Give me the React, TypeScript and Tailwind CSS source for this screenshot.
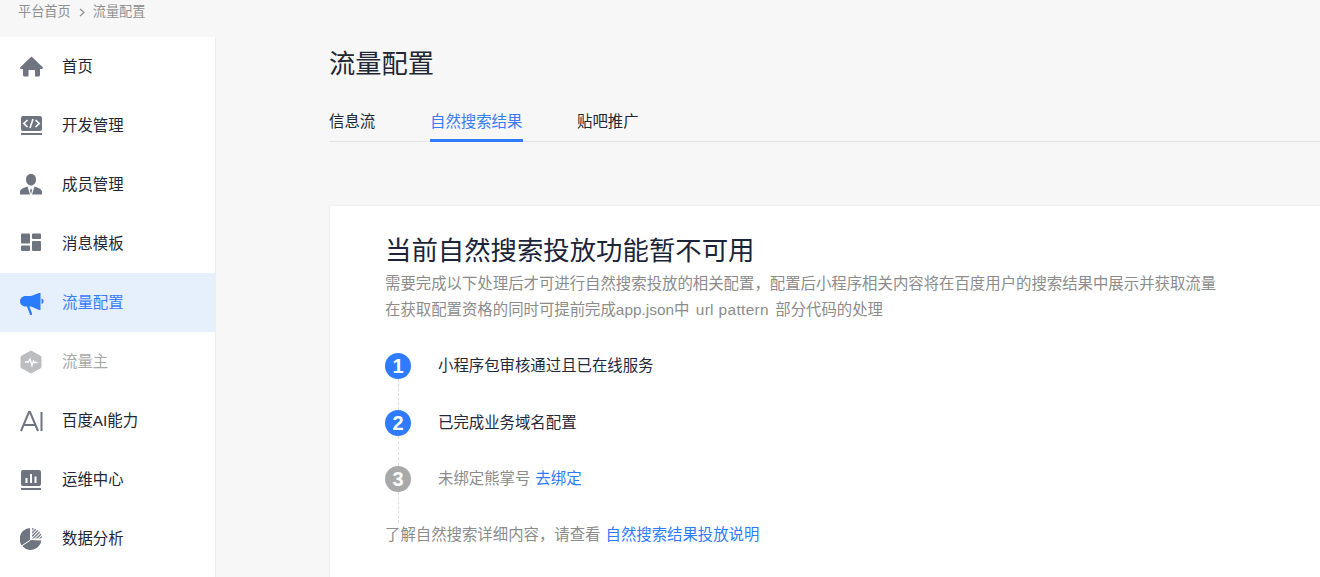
import type { ReactNode } from "react";

const HomeIcon = () => (
  <svg width="24" height="24" viewBox="0 0 24 24" fill="currentColor">
    <path d="M11 1.5 L22.5 12.5 Q22.5 14 21 14 L19.5 14 L19.5 20 Q19.5 21.5 18 21.5 L14.5 21.5 L14.5 15 L8 15 L8 21.5 L4 21.5 Q2.5 21.5 2.5 20 L2.5 14 L1 14 Q-0.5 14 -0.5 12.5 Z" transform="translate(0.5 0)" />
  </svg>
);

const CodeIcon = () => (
  <svg width="24" height="24" viewBox="0 0 24 24">
    <rect x="1" y="2" width="21" height="15" rx="2" fill="currentColor" />
    <rect x="1" y="19" width="21" height="2" fill="currentColor" />
    <path d="M7.5 6 L3.8 9.5 L7.5 13 M15.5 6 L19.2 9.5 L15.5 13 M13 5 L10 14" fill="none" stroke="#fff" strokeWidth="1.6" />
  </svg>
);

const UserIcon = () => (
  <svg width="24" height="24" viewBox="0 0 24 24" fill="currentColor">
    <path d="M11 1 C14.5 1 16 3.5 16 6.5 C16 10 13.8 12.5 11 12.5 C8.2 12.5 6 10 6 6.5 C6 3.5 7.5 1 11 1 Z" />
    <path d="M7.5 13.5 L10 21.5 L0 21.5 L0 19 C0 16 4 14.8 7.5 13.5 Z M14.5 13.5 C18 14.8 22 16 22 19 L22 21.5 L12 21.5 Z" />
    <path d="M11 15 L12 17.5 L11 21 L10 17.5 Z" />
  </svg>
);

const DashIcon = () => (
  <svg width="24" height="24" viewBox="0 0 24 24" fill="currentColor">
    <rect x="1" y="1.5" width="9" height="10" rx="1" />
    <rect x="1" y="13.5" width="9" height="5.5" rx="1" />
    <rect x="12" y="1.5" width="9" height="5.5" rx="1" />
    <rect x="12" y="9" width="9" height="10" rx="1" />
  </svg>
);

const MegaphoneIcon = () => (
  <svg width="24" height="24" viewBox="0 0 24 24" fill="currentColor">
    <path d="M6 5 L11 5 L19 2 L20.5 2 L20.5 19 L19 19 L11 15.5 L6 15.5 C2 15.5 0 13 0 10.25 C0 7.5 2 5 6 5 Z" />
    <path d="M21.5 7.5 C23 8 23.5 9 23.5 10.25 C23.5 11.5 23 12.5 21.5 13 Z" />
    <path d="M8 15 L11 23" fill="none" stroke="currentColor" strokeWidth="2.2" strokeLinecap="round" />
  </svg>
);

const PulseIcon = () => (
  <svg width="24" height="24" viewBox="0 0 24 24">
    <path d="M11 1 L21 6.5 L21 17.5 L11 23 L1 17.5 L1 6.5 Z" fill="currentColor" stroke="currentColor" strokeLinejoin="round" />
    <path d="M5 12 L8.5 12 L10 9 L12 15.5 L13.5 11 L14.5 12.5 L17.5 12.5" fill="none" stroke="#fff" strokeWidth="1.3" />
  </svg>
);

const AiIcon = () => (
  <svg width="24" height="24" viewBox="0 0 24 24" fill="none" stroke="currentColor" strokeWidth="2">
    <path d="M1 22 L9 3 L10 3 L18 22 M4 16 L15 16" />
    <path d="M21.5 3 L21.5 22" />
  </svg>
);

const ChartIcon = () => (
  <svg width="24" height="24" viewBox="0 0 24 24">
    <rect x="1" y="2" width="20" height="16" rx="2" fill="currentColor" />
    <rect x="1" y="20" width="20" height="2" fill="currentColor" />
    <path d="M5.5 10 L7.5 10 L7.5 15 L5.5 15 Z M10 6 L12 6 L12 15 L10 15 Z M14.5 8.5 L16.5 8.5 L16.5 15 L14.5 15 Z" fill="#fff" />
  </svg>
);

const PieIcon = () => (
  <svg width="24" height="24" viewBox="0 0 24 24">
    <defs>
      <pattern id="hatch" width="2.4" height="2.4" patternUnits="userSpaceOnUse" patternTransform="rotate(45)">
        <rect width="1.3" height="2.4" fill="currentColor" />
      </pattern>
    </defs>
    <path d="M10.5 1 A11 11 0 1 0 21.5 13.5 L10.5 13 Z" fill="currentColor" />
    <path d="M12 1 A11 11 0 0 1 22 11.5 L12 11.5 Z" fill="url(#hatch)" />
    <path d="M1.5 19 L10.5 13 L10.5 1" fill="none" stroke="#fff" strokeWidth="1" />
  </svg>
);

const menu: { label: string; icon: ReactNode; state?: "active" | "disabled" }[] = [
  { label: "首页", icon: <HomeIcon /> },
  { label: "开发管理", icon: <CodeIcon /> },
  { label: "成员管理", icon: <UserIcon /> },
  { label: "消息模板", icon: <DashIcon /> },
  { label: "流量配置", icon: <MegaphoneIcon />, state: "active" },
  { label: "流量主", icon: <PulseIcon />, state: "disabled" },
  { label: "百度AI能力", icon: <AiIcon /> },
  { label: "运维中心", icon: <ChartIcon /> },
  { label: "数据分析", icon: <PieIcon /> },
];

const steps = [
  { n: 1, text: "小程序包审核通过且已在线服务", on: true },
  { n: 2, text: "已完成业务域名配置", on: true },
  { n: 3, text: "未绑定熊掌号", on: false },
];

export default function App() {
  return (
    <div className="h-[577px] w-[1320px] overflow-hidden bg-[#f7f7f7] font-['Liberation_Sans','Noto_Sans_CJK_SC',sans-serif] text-[15.4px] text-[#222733]">
      <div className="flex h-[37px] items-start pl-[18px] pt-[3px] text-[13.2px] leading-[18px] text-[#8f8f8f]">
        <span>平台首页</span>
        <svg className="mx-[7px] mt-[5px]" width="8" height="9" viewBox="0 0 8 9" fill="none" stroke="currentColor" strokeWidth="1.2">
          <path d="M2 1 L6 4.5 L2 8" />
        </svg>
        <span>流量配置</span>
      </div>

      <div className="flex">
        <aside className="w-[216px] shrink-0 border-r border-[#eeeeee] bg-white">
          {menu.map((item) => (
            <div
              key={item.label}
              className={`flex h-[59px] items-center gap-[18px] pl-[20px] pt-px ${
                item.state === "active"
                  ? "bg-[#e6f0fd] text-[#3a7bf6]"
                  : item.state === "disabled"
                    ? "text-[#a8a8a8]"
                    : ""
              }`}
            >
              <span
                className={
                  item.state === "active"
                    ? "text-[#2b7bff]"
                    : item.state === "disabled"
                      ? "text-[#bcbdc1]"
                      : "text-[#6f7580]"
                }
              >
                {item.icon}
              </span>
              <span>{item.label}</span>
            </div>
          ))}
        </aside>

        <main className="ml-[113px] min-w-0 flex-1">
          <h1 className="mt-[9px] text-[26.25px] leading-[36px] text-[#222733]">流量配置</h1>
          <div className="mt-[29px] flex h-[31px] border-b border-[#e3e3e3] leading-[22px]">
            <span className="w-[101px]">信息流</span>
            <span className="h-[31px] w-[93px] border-b-[3px] border-[#2f7bff] text-[#3a7bf6]">自然搜索结果</span>
            <span className="ml-[54px]">贴吧推广</span>
          </div>

          <section className="ml-px mt-[64px] h-[400px] w-[1100px] rounded-[2px] bg-white pl-[55px] pt-[28px] shadow-[0_0_3px_rgba(0,0,0,0.08)]">
            <h2 className="text-[26.4px] leading-[34px] text-[#1c2438]">当前自然搜索投放功能暂不可用</h2>
            <p className="mt-[3px] leading-[26px] text-[#8c8c8c]">
              需要完成以下处理后才可进行自然搜索投放的相关配置，配置后小程序相关内容将在百度用户的搜索结果中展示并获取流量
              <br />
              在获取配置资格的同时可提前完成app.json中 <span className="mx-[2px] tracking-[0.36px]">url pattern</span> 部分代码的处理
            </p>

            <ol className="mt-[30px]">
              {steps.map((s) => (
                <li key={s.n} className="flex h-[56.5px] items-start">
                  <div className="flex h-full w-[26px] flex-col items-center">
                    <span
                      className={`flex size-[26px] shrink-0 items-center justify-center rounded-full text-[20px] font-bold leading-none text-white ${
                        s.on ? "bg-[#2f7bff]" : "bg-[#a9a9a9]"
                      }`}
                    >
                      {s.n}
                    </span>
                    <span className="h-full border-l border-dashed border-[#dddddd]" />
                  </div>
                  <div className="ml-[27px] leading-[26px] text-[#1f2a3d]">
                    <span className={s.on ? "" : "text-[#8c8c8c]"}>{s.text}</span>
                    {!s.on && <a className="ml-[5px] text-[#2f7bff]">去绑定</a>}
                  </div>
                </li>
              ))}
            </ol>

            <p className="mt-[-2px] leading-[27px] text-[#8c8c8c]">
              了解自然搜索详细内容，请查看<a className="ml-[5px] text-[#2f7bff]">自然搜索结果投放说明</a>
            </p>
          </section>
        </main>
      </div>
    </div>
  );
}
